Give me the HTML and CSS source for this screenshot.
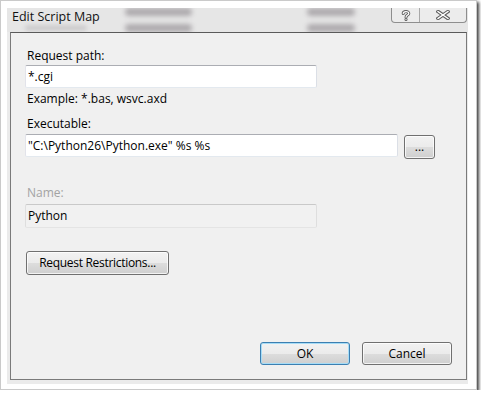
FILE: index.html
```html
<!DOCTYPE html>
<html>
<head>
<meta charset="utf-8">
<link rel="stylesheet" href="styles.css">
</head>
<body>
<div class="frame">
  <div class="window">
    <div class="titlebar">
      <div class="title-wrap">
        <span class="title">Edit Script Map</span>
        <i class="ghost-faint"></i>
      </div>
      <div class="ghost ghost-a"><i></i><i></i></div>
      <div class="ghost ghost-b"><i></i><i></i></div>
      <div class="caption">
        <span class="cap help">
          <svg width="10" height="11" viewBox="0 0 10 11">
            <path d="M2.2 3.6 C2.2 0.9 7.8 0.9 7.8 3.4 C7.8 5.2 5 5 5 7.2" fill="none" stroke="#5c5c5c" stroke-width="3" stroke-linecap="round"/>
            <circle cx="5" cy="9.4" r="1.5" fill="#5c5c5c"/>
            <path d="M2.2 3.6 C2.2 0.9 7.8 0.9 7.8 3.4 C7.8 5.2 5 5 5 7.2" fill="none" stroke="#fff" stroke-width="1.2" stroke-linecap="round"/>
            <circle cx="5" cy="9.4" r="0.6" fill="#fff"/>
          </svg>
        </span>
        <span class="cap close">
          <svg width="14" height="10" viewBox="0 0 14 10">
            <path d="M2 1.5 L12 8.5 M12 1.5 L2 8.5" stroke="#5c5c5c" stroke-width="3.4" stroke-linecap="square"/>
            <path d="M2 1.5 L12 8.5 M12 1.5 L2 8.5" stroke="#fff" stroke-width="1.4" stroke-linecap="square"/>
          </svg>
        </span>
      </div>
    </div>
    <div class="panel">
      <div class="lbl lbl-req">Request path:</div>
      <div class="tb tb-short tb-req">*.cgi</div>
      <div class="lbl hint">Example: *.bas, wsvc.axd</div>
      <div class="lbl lbl-exe">Executable:</div>
      <div class="row">
        <div class="tb tb-long">"C:\Python26\Python.exe" %s %s</div>
        <button class="btn btn-browse">...</button>
      </div>
      <div class="lbl lbl-name">Name:</div>
      <div class="tb tb-short tb-name">Python</div>
      <button class="btn btn-restrict">Request Restrictions...</button>
      <div class="actions">
        <button class="btn btn-ok">OK</button>
        <button class="btn btn-cancel">Cancel</button>
      </div>
    </div>
  </div>
</div>
</body>
</html>
```
FILE: styles.css
```css
body {
  margin: 0;
  background: #fff;
  font-family: "Open Sans", "Noto Sans", sans-serif;
  font-size: 12px;
  color: #000;
}

.frame {
  width: 477px;
  height: 390px;
  box-sizing: border-box;
  border: 1px solid #cacaca;
  background: #fff;
  box-shadow: 2px 2px 3px rgba(0, 0, 0, 0.75);
  padding: 7px 0 0 6px;
}

.window {
  width: 461px;
  height: 376px;
  background: #ebebeb;
  display: flex;
  flex-direction: column;
}

.titlebar {
  height: 24px;
  flex: none;
  background: #e6e6e6;
  display: flex;
  align-items: flex-start;
  overflow: hidden;
}

.title-wrap {
  width: 118px;
  height: 24px;
  box-sizing: border-box;
  padding-left: 5px;
  display: flex;
  flex-direction: column;
}

.title {
  margin-top: 1px;
  line-height: 16px;
  font-size: 12.5px;
  color: #111;
  white-space: nowrap;
}

.ghost-faint {
  display: block;
  flex: none;
  width: 62px;
  height: 6px;
  margin: 0 0 0 13px;
  border-radius: 3px;
  background: #a09ca0;
  opacity: 0.35;
  filter: blur(2px);
}

.ghost {
  height: 24px;
  box-sizing: border-box;
  padding: 0;
  display: flex;
  flex-direction: column;
  justify-content: space-between;
}

.ghost i {
  display: block;
  flex: none;
  height: 8px;
  border-radius: 4px;
  background: #9a969a;
  opacity: 0.75;
  filter: blur(2.5px);
}

.ghost-a { width: 67px; }
.ghost-b { width: 48px; margin-left: 115px; }

.caption {
  margin-left: auto;
  margin-right: 1px;
  display: flex;
  height: 14px;
  border: 1px solid #8e8e8e;
  border-top: 0;
  border-radius: 0 0 4px 4px;
  background: #ececec;
}

.cap {
  display: flex;
  align-items: center;
  justify-content: center;
}

.help {
  width: 27px;
  border-right: 1px solid #a8a8a8;
}

.close { width: 46px; }

.panel {
  flex: 1;
  margin: 0 1px 4px 3px;
  border: 1px solid #7a7a7a;
  border-top-color: #5a5a5a;
  background: #f0f0f0;
  display: flex;
  flex-direction: column;
  align-items: flex-start;
  padding: 0 14px 14px 14px;
}

.lbl {
  line-height: 15px;
  padding-left: 2px;
  white-space: nowrap;
}

.lbl-req { margin-top: 15px; }
.hint { margin-top: 3px; }
.lbl-exe { margin-top: 10px; }
.lbl-name { margin-top: 26px; color: #a3a3a3; }

.tb {
  height: 23px;
  box-sizing: border-box;
  border: 1px solid;
  border-color: #abadb3 #dbdfe6 #e3e9ef #e2e3ea;
  border-radius: 2px;
  background: #fff;
  padding: 0 3px 0 2px;
  line-height: 21px;
  white-space: nowrap;
}

.tb-short { width: 292px; }
.tb-long { width: 373px; }
.tb-req { margin-top: 2px; }

.tb-name {
  margin-top: 4px;
  height: 24px;
  line-height: 22px;
  background: #f1f1f1;
  border-color: #c9c9c9 #dedede #e4e4e4 #dedede;
}

.row {
  margin-top: 3px;
  display: flex;
  align-items: flex-start;
  gap: 6px;
}

.btn {
  box-sizing: border-box;
  border: 1px solid #707070;
  border-radius: 3px;
  background: linear-gradient(#f2f2f2, #ebebeb 50%, #dddddd 50%, #cfcfcf);
  box-shadow: inset 0 0 0 1px rgba(255, 255, 255, 0.75);
  font-family: "Open Sans", "Noto Sans", sans-serif;
  font-size: 12px;
  color: #000;
  padding: 0;
  line-height: 20px;
}

.btn-browse {
  width: 31px;
  height: 24px;
  margin-top: 1px;
  line-height: 22px;
}

.btn-restrict {
  width: 143px;
  height: 24px;
  margin-top: 23px;
  margin-left: 1px;
  letter-spacing: -0.3px;
}

.actions {
  margin-top: auto;
  align-self: flex-end;
  display: flex;
  gap: 12px;
}

.actions .btn {
  width: 90px;
  height: 23px;
}

.btn-ok {
  border-color: #3c7fb1;
  box-shadow: inset 0 0 0 1px #a6dcf6;
}
```
